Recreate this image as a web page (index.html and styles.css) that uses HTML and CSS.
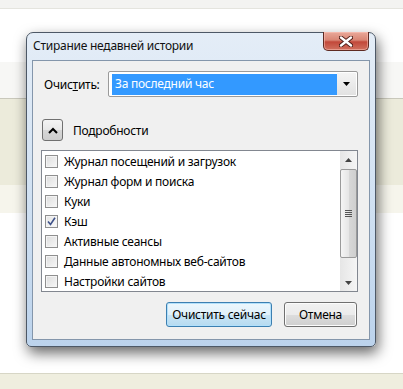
FILE: index.html
```html
<!DOCTYPE html>
<html lang="ru">
  <head>
    <meta charset="UTF-8" />
    <title>Стирание недавней истории</title>
    <link rel="stylesheet" href="styles.css">
  </head>
  <body>
    <div class="page">
      <div class="page__top"></div>
      <div class="page__white"></div>
      <div class="page__grey"></div>
      <div class="page__beige"></div>
      <div class="page__light"></div>
      <div class="page__white page__white--big"></div>
      <div class="page__foot"></div>
    </div>

    <section class="window">
      <div class="window__title">
        <span class="window__caption">Стирание недавней истории</span>
        <button class="window__close" type="button">
          <svg width="14" height="11" viewBox="0 0 14 11">
            <path d="M2 1.5 L12 9.5 M12 1.5 L2 9.5" stroke="#4a1a14" stroke-width="4.2" stroke-linecap="round" />
            <path d="M2 1.5 L12 9.5 M12 1.5 L2 9.5" stroke="#fff" stroke-width="2.4" stroke-linecap="round" />
          </svg>
        </button>
      </div>

      <div class="window__client">
        <div class="range">
          <label class="range__label">Очис<u>т</u>ить:</label>
          <div class="select">
            <span class="select__value">За последний час</span>
            <span class="select__arrow">
              <svg width="7" height="4" viewBox="0 0 7 4"><path d="M0 0h7L3.5 4z" fill="#000" /></svg>
            </span>
          </div>
        </div>

        <div class="details">
          <span class="details__toggle">
            <svg width="10" height="7" viewBox="0 0 10 7">
              <path d="M1 6 L5 2 L9 6" stroke="#000" stroke-width="2" fill="none" />
            </svg>
          </span>
          <span>Подробности</span>
        </div>

        <div class="list">
          <ul class="list__items">
            <li class="list__item"><span class="check"></span>Журнал посещений и загрузок</li>
            <li class="list__item"><span class="check"></span>Журнал форм и поиска</li>
            <li class="list__item"><span class="check"></span>Куки</li>
            <li class="list__item">
              <span class="check check--on">
                <svg width="9" height="9" viewBox="0 0 9 9">
                  <path d="M1 4.5 L3.5 7.5 L8 0.8" stroke="#3f528a" stroke-width="1.6" fill="none" />
                </svg>
              </span>Кэш
            </li>
            <li class="list__item"><span class="check"></span>Активные сеансы</li>
            <li class="list__item"><span class="check"></span>Данные автономных веб-сайтов</li>
            <li class="list__item"><span class="check"></span>Настройки сайтов</li>
          </ul>
          <div class="scroll">
            <span class="scroll__btn">
              <svg width="7" height="4" viewBox="0 0 7 4"><path d="M0 4h7L3.5 0z" fill="#444" /></svg>
            </span>
            <div class="scroll__track">
              <div class="scroll__thumb">
                <span class="scroll__grip"></span>
              </div>
            </div>
            <span class="scroll__btn">
              <svg width="7" height="4" viewBox="0 0 7 4"><path d="M0 0h7L3.5 4z" fill="#444" /></svg>
            </span>
          </div>
        </div>

        <div class="actions">
          <button class="btn btn--default" type="button">Очистить сейчас</button>
          <button class="btn btn--cancel" type="button">Отмена</button>
        </div>
      </div>
    </section>
  </body>
</html>
```

FILE: styles.css
```css
* {
  margin: 0;
  padding: 0;
  box-sizing: border-box;
}
html {
  font-family: "Noto Sans", "Open Sans", sans-serif;
  font-size: 12px;
  letter-spacing: -0.25px;
}
body {
  width: 403px;
  height: 389px;
  overflow: hidden;
  position: relative;
  background: #fff;
}

/* page behind the dialog */
.page__top {
  height: 9px;
  background: #f3f3f1;
  border-bottom: 1px solid #e4e4de;
}
.page__white {
  height: 53px;
  background: #fff;
}
.page__grey {
  height: 36px;
  background: #f7f7f5;
}
.page__beige {
  height: 87px;
  background: #ecebdb;
  border-top: 1px solid #c9c8bb;
}
.page__light {
  height: 28px;
  background: #f6f5ec;
}
.page__white--big {
  height: 160px;
}
.page__foot {
  height: 16px;
  background: #efeedf;
  border-top: 1px solid #d7d6c6;
}

/* dialog window */
.window {
  position: absolute;
  left: 26px;
  top: 32px;
  width: 350px;
  height: 315px;
  display: flex;
  flex-direction: column;
  padding: 0 5px 6px 5px;
  border: 1px solid #4d5866;
  border-radius: 7px 7px 5px 5px;
  background: linear-gradient(to bottom, #e4edf7 0%, #d4e3f3 45%, #bcd3ec 100%);
  box-shadow: 2px 6px 14px rgba(0, 0, 0, 0.6);
}
.window__title {
  height: 27px;
  display: flex;
  justify-content: space-between;
  align-items: flex-start;
}
.window__caption {
  padding: 5px 0 0 1px;
  color: #111;
  font-size: 12px;
  line-height: 16px;
}
.window__close {
  width: 46px;
  height: 19px;
  margin-right: 1px;
  margin-top: -1px;
  display: flex;
  justify-content: center;
  align-items: center;
  border: 1px solid #5e2a22;
  border-top: none;
  border-radius: 0 0 5px 5px;
  background: linear-gradient(to bottom, #e9a99a 0%, #d98574 45%, #c2483a 55%, #d0715f 100%);
  box-shadow: inset 0 0 0 1px rgba(255, 200, 190, 0.5);
}
.window__client {
  flex: 1;
  display: flex;
  flex-direction: column;
  padding: 10px 11px 12px 8px;
  background: #f0f0f0;
  border: 1px solid #8496ab;
}

/* time range row */
.range {
  display: flex;
  align-items: center;
  height: 26px;
}
.range__label {
  width: 67px;
  padding-left: 3px;
  color: #000;
}
.range__label u {
  text-decoration: underline;
}
.select {
  width: 250px;
  height: 26px;
  display: flex;
  align-items: center;
  padding: 2px 1px 2px 3px;
  border: 1px solid #9a9a9a;
  border-radius: 2px;
  background: #fff;
}
.select__value {
  flex: 1;
  height: 21px;
  padding-left: 3px;
  line-height: 20px;
  color: #fff;
  background: #3399ff;
}
.select__arrow {
  width: 19px;
  height: 22px;
  display: flex;
  justify-content: center;
  align-items: center;
  background: linear-gradient(to bottom, #f4f4f4, #e2e2e2);
}

/* details expander */
.details {
  display: flex;
  align-items: center;
  gap: 10px;
  margin-top: 22px;
  height: 22px;
  padding-left: 1px;
}
.details__toggle {
  width: 21px;
  height: 22px;
  display: flex;
  justify-content: center;
  align-items: center;
  border: 1px solid #707070;
  border-radius: 3px;
  background: linear-gradient(to bottom, #f4f4f4 0%, #e8e8e8 50%, #d6d6d6 51%, #cdcdcd 100%);
}

/* items list */
.list {
  display: flex;
  margin-top: 9px;
  height: 142px;
  border: 1px solid #828790;
  background: #fff;
}
.list__items {
  flex: 1;
  list-style: none;
  padding-left: 3px;
}
.list__item {
  display: flex;
  align-items: center;
  gap: 6px;
  height: 20px;
  color: #000;
}
.check {
  width: 13px;
  height: 13px;
  display: flex;
  justify-content: center;
  align-items: center;
  border: 1px solid #8f8f8f;
  background: linear-gradient(135deg, #dcdcdc, #f8f8f8);
  box-shadow: inset 0 0 0 1px #f4f4f4;
}
.check--on {
  background: linear-gradient(135deg, #e4e4e4, #fafafa);
}
.scroll {
  width: 17px;
  display: flex;
  flex-direction: column;
  background: linear-gradient(to right, #e6e6e6, #f5f5f5);
}
.scroll__btn {
  height: 17px;
  display: flex;
  justify-content: center;
  align-items: center;
}
.scroll__track {
  flex: 1;
  padding-top: 1px;
}
.scroll__thumb {
  height: 89px;
  display: flex;
  justify-content: center;
  align-items: center;
  border: 1px solid #9a9a9a;
  border-radius: 2px;
  background: linear-gradient(to right, #f5f5f5 0%, #e6e6e6 50%, #d8d8d8 51%, #cfcfcf 100%);
}
.scroll__grip {
  width: 7px;
  height: 7px;
  background: repeating-linear-gradient(to bottom, #555 0, #555 1px, transparent 1px, transparent 2px);
}

/* buttons */
.actions {
  display: flex;
  justify-content: flex-end;
  gap: 12px;
  margin-top: 10px;
  padding-right: 1px;
}
.btn {
  height: 25px;
  font-family: inherit;
  font-size: 12px;
  letter-spacing: -0.25px;
  color: #000;
  border: 1px solid #707070;
  border-radius: 3px;
  background: linear-gradient(to bottom, #f2f2f2 0%, #ebebeb 50%, #dddddd 51%, #cfcfcf 100%);
  box-shadow: inset 0 0 0 1px #fcfcfc;
}
.btn--default {
  width: 106px;
  border-color: #3c7fb1;
  background: linear-gradient(to bottom, #ecf7fd 0%, #e0f0fa 50%, #c9e5f6 51%, #b6daf0 100%);
  box-shadow: inset 0 0 0 1px #b2e0fb;
}
.btn--cancel {
  width: 73px;
}
```
